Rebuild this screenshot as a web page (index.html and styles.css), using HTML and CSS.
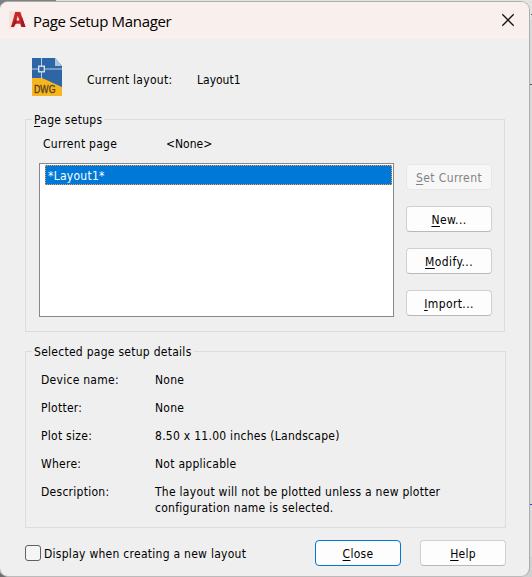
FILE: index.html
```html
<!DOCTYPE html>
<html lang="en">
<head>
<meta charset="utf-8">
<title>Page Setup Manager</title>
<link rel="stylesheet" href="styles.css">
</head>
<body>
<div class="backdrop">
  <i class="edge edge-a"></i><i class="edge edge-b"></i><i class="edge edge-c"></i>
</div>
<main class="dialog">
  <header class="titlebar">
    <svg class="app-icon" width="18" height="18" viewBox="0 0 18 18">
      <path d="M0 0h13v9L5 18H0z" fill="#f6e2da"/>
      <path d="M6.2 1h5.1L16.5 16h-4.3l-1-3.2H6.5L4.8 16H2z" fill="#c9252b"/>
      <path d="M2 16 7.5 7l1 2.5L4.8 16zM12 10l1.2 6h3.3L13 6z" fill="#9b1c20"/>
      <path d="M8.8 4.8 7.4 9.6h3z" fill="#f8e6e0"/>
    </svg>
    <h1 class="title">Page Setup Manager</h1>
    <svg class="close-x" width="14" height="14" viewBox="0 0 14 14"><path d="M1.3 1.3 12.7 12.7M12.7 1.3 1.3 12.7" stroke="#151515" stroke-width="1.3"/></svg>
  </header>

  <section class="current">
    <svg class="dwg" width="30" height="38" viewBox="0 0 30 38">
      <path d="M0 0h23l7 8v30H0z" fill="#2e65a4"/>
      <path d="M23 0v8h7z" fill="#a9c2de"/>
      <path d="M0 20h10l20 9v9H0z" fill="#f7b51f"/>
      <path d="M9.5 0v8M9.5 14v6M0 11h6.5M12.5 11H30" stroke="#b7cee7" stroke-width="1"/>
      <rect x="6.7" y="8.2" width="5.6" height="5.6" fill="#2e65a4" stroke="#dce9f6" stroke-width="1.3"/>
      <text class="dwg-text" x="2" y="35.3" textLength="21.5" lengthAdjust="spacingAndGlyphs">DWG</text>
    </svg>
    <span class="current-label">Current layout:</span>
    <span class="short">Layout1</span>
  </section>

  <fieldset class="group setups">
    <legend><u>P</u>age setups</legend>
    <div class="page-row"><span class="page-label">Current page</span><span class="short">&lt;None&gt;</span></div>
    <div class="setup-body">
      <div class="list"><div class="item">*Layout1*</div></div>
      <div class="buttons">
        <button class="btn" disabled><span><u>S</u>et Current</span></button>
        <button class="btn"><span><u>N</u>ew...</span></button>
        <button class="btn"><span><u>M</u>odify...</span></button>
        <button class="btn"><span><u>I</u>mport...</span></button>
      </div>
    </div>
  </fieldset>

  <fieldset class="group details">
    <legend>Selected page setup details</legend>
    <dl class="facts">
      <dt>Device name:</dt><dd>None</dd>
      <dt>Plotter:</dt><dd>None</dd>
      <dt>Plot size:</dt><dd>8.50 x 11.00 inches (Landscape)</dd>
      <dt>Where:</dt><dd>Not applicable</dd>
      <dt>Description:</dt><dd>The layout will not be plotted unless a new plotter<br>configuration name is selected.</dd>
    </dl>
  </fieldset>

  <footer class="footer">
    <label class="check"><span class="box"></span><span class="check-text">Display when creating a new layout</span></label>
    <button class="btn primary"><span><u>C</u>lose</span></button>
    <button class="btn"><span><u>H</u>elp</span></button>
  </footer>
</main>
</body>
</html>
```
FILE: styles.css
```css
* { box-sizing: border-box; }
body {
  margin: 0;
  width: 532px;
  height: 577px;
  overflow: hidden;
  position: relative;
  background: #d9d9d9;
  color: #000;
  font: 12px/16px "DejaVu Sans Condensed", "DejaVu Sans", sans-serif;
  font-stretch: condensed;
  letter-spacing: 0.27px;
}
.backdrop {
  position: absolute;
  inset: 0;
  background: linear-gradient(90deg, #808080 56px, #e4e4e2 56px) top / 100% 20px no-repeat,
    linear-gradient(90deg, #6d6d6d 30px, #cfcfcf 30px) bottom / 100% 20px no-repeat;
}
.edge { position: absolute; right: 0; width: 3px; height: 1px; background: #555; }
.edge-a { top: 14px; width: 1px; }
.edge-b { top: 84px; }
.edge-c { top: 504px; background: #4040c0; }
.dialog {
  width: 531px;
  height: 576px;
  margin: 1px 0 0 -1px;
  position: relative;
  display: flex;
  flex-direction: column;
  border: 1px solid #adadad;
  border-bottom-color: #bbb;
  border-radius: 9px;
  background: #efefef;
  overflow: hidden;
}
.titlebar {
  height: 37px;
  flex: none;
  display: flex;
  align-items: center;
  background: #f9f0ed;
  padding: 0 14px 0 9px;
}
.app-icon { margin-bottom: 2px; }
.title {
  margin: 0 0 0 6px;
  font: 15px/20px "Open Sans", "Noto Sans", sans-serif;
  letter-spacing: -0.32px;
  flex: 1;
}
.close-x { margin-bottom: 1px; }
.current { height: 72px; flex: none; display: flex; align-items: center; padding: 4px 0 0 32px; }
.dwg { flex: none; margin-bottom: 1px; }
.dwg-text { font: 10px "Liberation Sans", sans-serif; fill: #4f4120; stroke: #4f4120; stroke-width: 0.3px; letter-spacing: 0; }
.current-label { width: 110px; margin: 5px 0 0 25px; }
.current .short { margin-top: 5px; }
.short { letter-spacing: 0; }
.group { min-width: 0; width: 481px; margin: 0 0 0 25px; border: 1px solid #dcdcdc; padding: 0; flex: none; }
.group legend { height: 16px; line-height: 18px; margin-left: 6px; padding: 0 2px; }
.setups { height: 221px; width: 480px; }
.page-row { display: flex; padding: 9px 0 0 17px; }
.page-label { width: 123px; }
.setup-body { display: flex; gap: 12px; padding: 11px 0 0 13px; }
.list { flex: none; width: 355px; height: 154px; border: 1px solid #828790; background: #fff; padding: 1px 1px 0 5px; }
.item { height: 20px; background: #0078d7; color: #fff; border: 1px dotted #ff9a45; line-height: 20px; padding-left: 2px; }
.buttons { display: flex; flex-direction: column; gap: 16px; padding-top: 1px; }
.btn {
  width: 86px;
  height: 26px;
  padding: 1px 0 0;
  border: 1px solid #d0d0d0;
  border-bottom-color: #b9b9b9;
  border-radius: 4px;
  background: #fdfdfd;
  color: #000;
  font: inherit;
  letter-spacing: 0.4px;
  white-space: nowrap;
}
.btn:disabled { background: #f7f7f7; border-color: #e7e7e7; color: #838383; }
.primary { border-color: #0078d4; }
u { text-underline-offset: 2px; text-decoration-thickness: 1px; text-decoration-skip-ink: none; }
.details { margin-top: 11px; height: 185px; }
.facts { display: grid; grid-template-columns: 114px 1fr; row-gap: 12px; margin: 13px 0 0 15px; }
.facts dd { margin: 0; white-space: nowrap; }
.footer { display: flex; padding: 12px 0 0 25px; }
.footer .btn { letter-spacing: 0.27px; }
.check { display: flex; align-items: center; width: 290px; gap: 3px; white-space: nowrap; }
.check-text { padding-top: 1px; }
.box { width: 16px; height: 16px; border: 1px solid #606060; border-radius: 3px; background: #f5f5f5; }
.footer .btn + .btn { margin-left: 19px; }
```
